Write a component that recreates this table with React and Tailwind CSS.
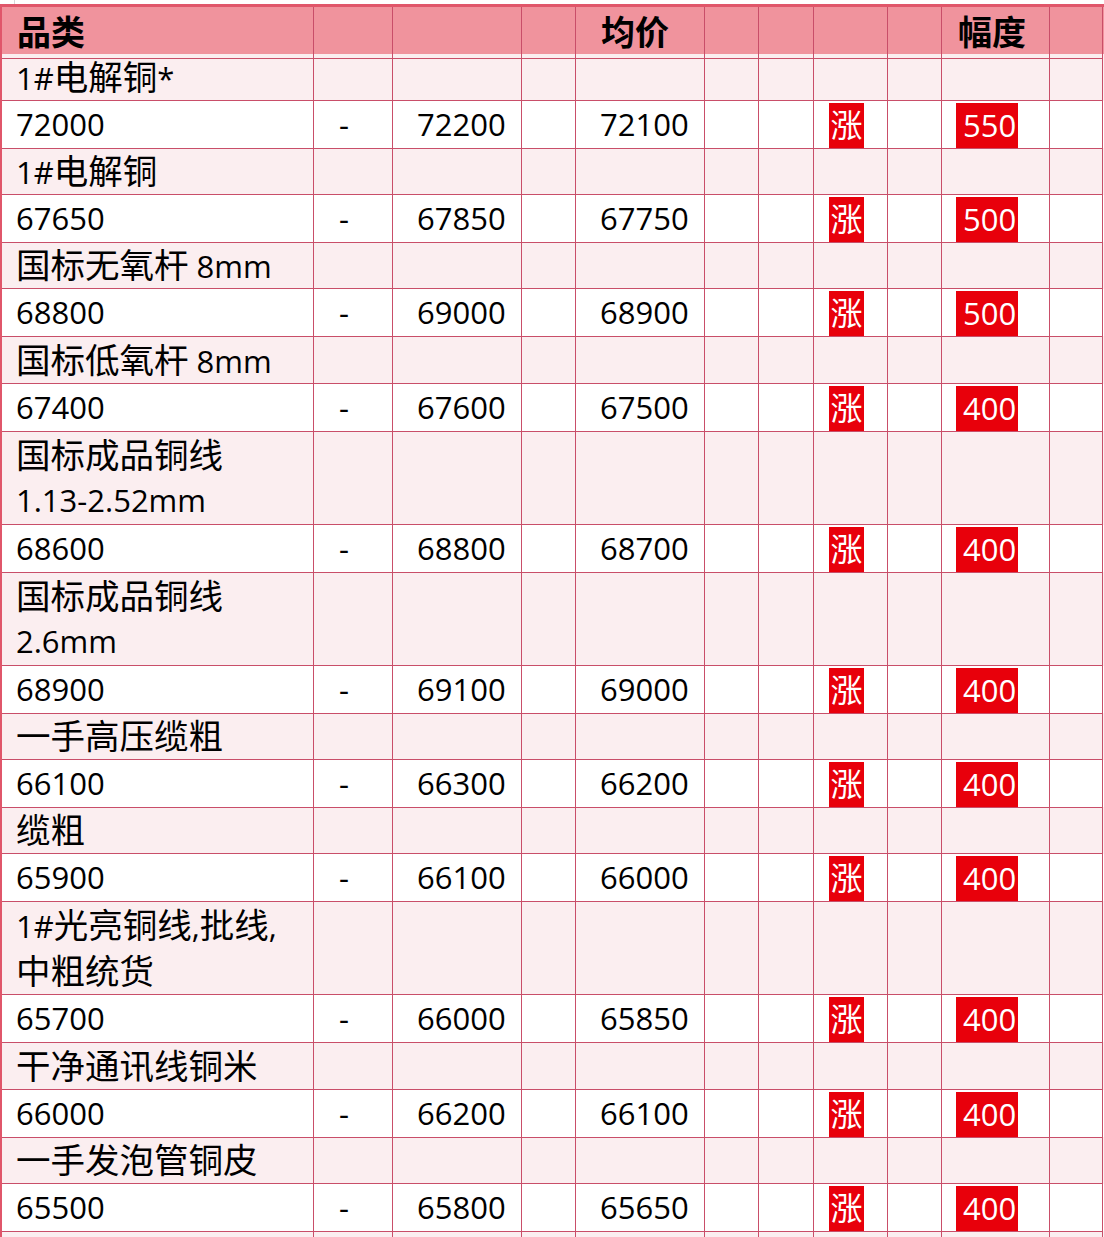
import React from 'react';

// column widths incl. right border, measured from the sheet grid
const cols = 'grid-cols-[312px_79px_129px_54px_129px_54px_55px_74px_54px_108px_53px]';

const rows = [
  { name: ['1#电解铜*'], v: ['72000', '72200', '72100', '550'] },
  { name: ['1#电解铜'], v: ['67650', '67850', '67750', '500'] },
  { name: ['国标无氧杆 8mm'], v: ['68800', '69000', '68900', '500'] },
  { name: ['国标低氧杆 8mm'], v: ['67400', '67600', '67500', '400'] },
  { name: ['国标成品铜线', '1.13-2.52mm'], v: ['68600', '68800', '68700', '400'] },
  { name: ['国标成品铜线', '2.6mm'], v: ['68900', '69100', '69000', '400'] },
  { name: ['一手高压缆粗'], v: ['66100', '66300', '66200', '400'] },
  { name: ['缆粗'], v: ['65900', '66100', '66000', '400'] },
  { name: ['1#光亮铜线,批线,', '中粗统货'], v: ['65700', '66000', '65850', '400'] },
  { name: ['干净通讯线铜米'], v: ['66000', '66200', '66100', '400'] },
  { name: ['一手发泡管铜皮'], v: ['65500', '65800', '65650', '400'] },
];

// CJK glyphs render a bit larger than the latin ones in the sheet
const Mixed = ({ text }) => {
  const parts = text.match(/[\u4e00-\u9fff]+|[^\u4e00-\u9fff]+/g) || [];
  return (
    <span className="whitespace-pre">
      {parts.map((p, i) =>
        /[\u4e00-\u9fff]/.test(p)
          ? <span key={i} className="text-[34.5px] font-normal">{p}</span>
          : <span key={i} className="text-[31px]">{p}</span>
      )}
    </span>
  );
};

const cell = 'border-r border-b border-[#c94e69] flex items-center';

const App = () => {
  return (
    <div className="w-[1104px] h-[1237px] overflow-hidden bg-white text-black font-medium font-['Open_Sans','Noto_Sans_CJK_SC',sans-serif]">
      {/* strip above the sheet */}
      <div className="h-[4px] flex">
        <div className="w-[15px] border-r border-[#d8d8d8]"></div>
      </div>

      <div className="border-t-[3px] border-l-2 border-[#e0566a]">
        {/* HEADER */}
        <div className={`grid ${cols} h-[47px] bg-[#f0939d]`}>
          <div className={`${cell} pl-[15px]`}><span className="text-[34px] font-semibold">品类</span></div>
          <div className={cell}></div>
          <div className={cell}></div>
          <div className={cell}></div>
          <div className={`${cell} pl-[25px]`}><span className="text-[34px] font-semibold">均价</span></div>
          <div className={cell}></div>
          <div className={cell}></div>
          <div className={cell}></div>
          <div className={cell}></div>
          <div className={`${cell} pl-[16px]`}><span className="text-[34px] font-semibold">幅度</span></div>
          <div className={cell}></div>
        </div>

        {rows.map((r, i) => (
          <React.Fragment key={i}>
            {/* name row */}
            <div className={`grid ${cols} ${r.name.length > 1 ? 'h-[94px]' : i === 3 || i === 9 ? 'h-[48px]' : 'h-[47px]'} bg-[#fbeef0]`}>
              <div className={`${cell} pl-[14px] flex-col !items-start justify-center`}>
                {r.name.map((l, j) => (
                  <div key={j} className="h-[46px] flex items-center"><Mixed text={l} /></div>
                ))}
              </div>
              {Array.from({ length: 10 }).map((_, k) => <div key={k} className={cell}></div>)}
            </div>

            {/* value row */}
            <div className={`grid ${cols} h-[47px] bg-white text-[31px]`}>
              <div className={`${cell} pl-[14px]`}>{r.v[0]}</div>
              <div className={`${cell} pl-[25px]`}>-</div>
              <div className={`${cell} pl-[24px]`}>{r.v[1]}</div>
              <div className={cell}></div>
              <div className={`${cell} pl-[24px]`}>{r.v[2]}</div>
              <div className={cell}></div>
              <div className={cell}></div>
              <div className={`${cell} !items-end pl-[15px]`}>
                <div className="w-[35px] h-[45px] bg-[#e8000b] text-white text-[32px] font-normal flex items-center justify-center">涨</div>
              </div>
              <div className={cell}></div>
              <div className={`${cell} !items-end pl-[14px]`}>
                <div className="w-[62px] h-[45px] bg-[#e8000b] text-white font-normal flex items-center pl-[7px]">{r.v[3]}</div>
              </div>
              <div className={cell}></div>
            </div>
          </React.Fragment>
        ))}

        {/* next row, cut off */}
        <div className={`grid ${cols} h-[47px] bg-[#fbeef0]`}>
          {Array.from({ length: 11 }).map((_, k) => <div key={k} className={cell}></div>)}
        </div>
      </div>
    </div>
  );
};

export default App;
